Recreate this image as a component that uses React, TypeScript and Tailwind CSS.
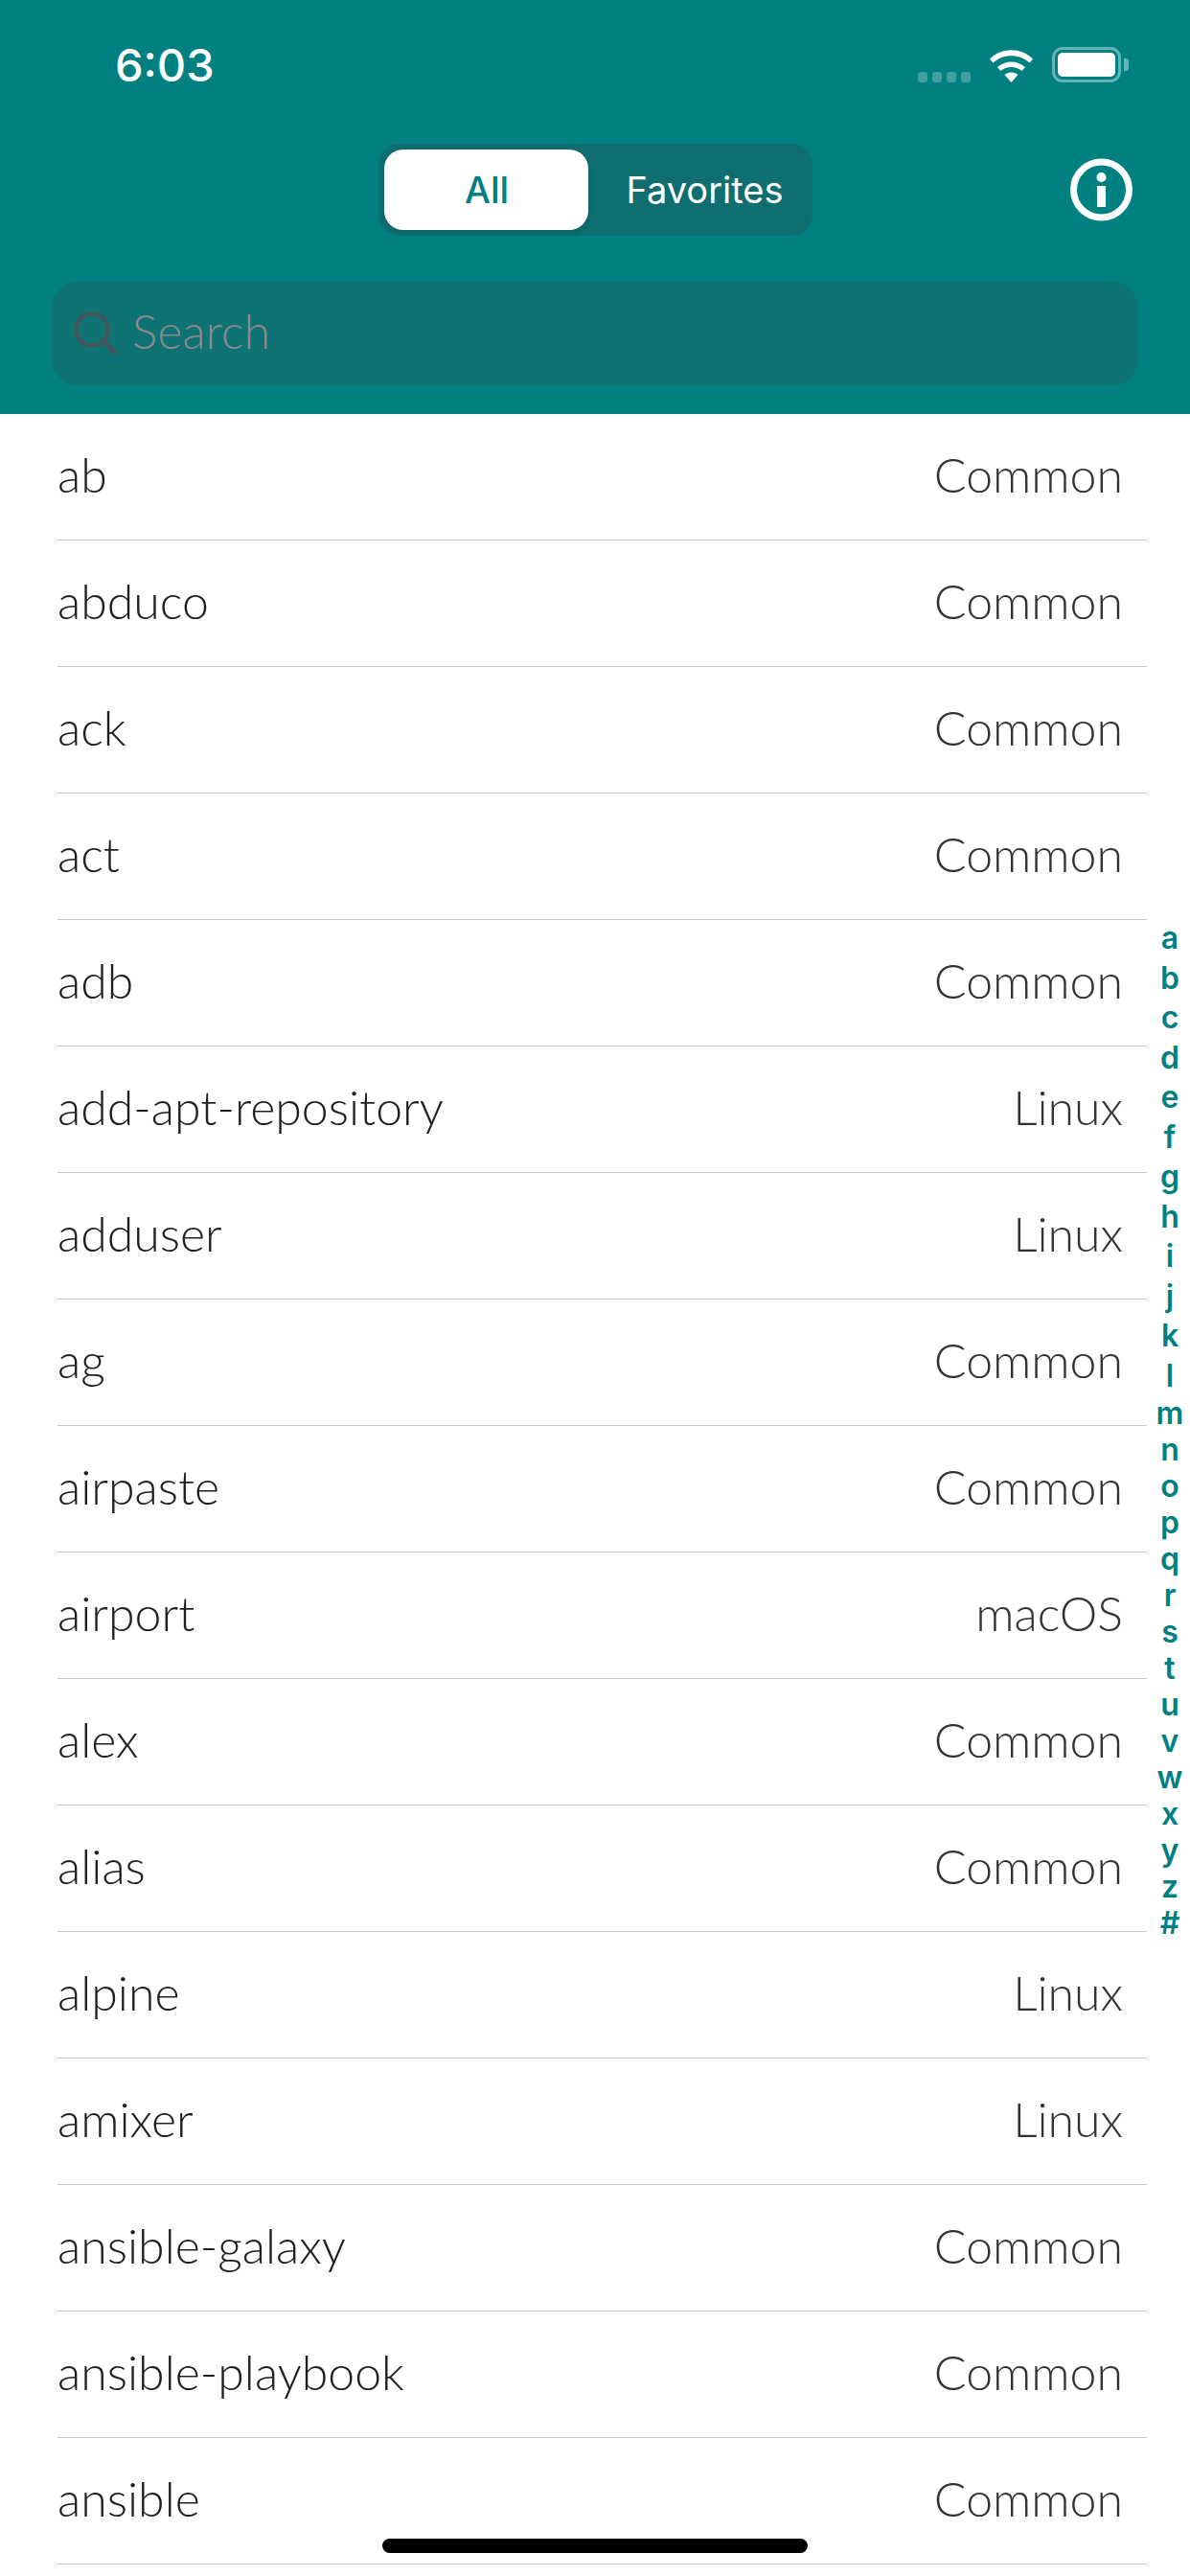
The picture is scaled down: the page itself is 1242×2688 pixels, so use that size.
const rows: [string, string][] = [
  ["ab", "Common"], ["abduco", "Common"], ["ack", "Common"], ["act", "Common"], ["adb", "Common"],
  ["add-apt-repository", "Linux"], ["adduser", "Linux"], ["ag", "Common"], ["airpaste", "Common"],
  ["airport", "macOS"], ["alex", "Common"], ["alias", "Common"], ["alpine", "Linux"], ["amixer", "Linux"],
  ["ansible-galaxy", "Common"], ["ansible-playbook", "Common"], ["ansible", "Common"],
];
const letters = "abcdefghijklmnopqrstuvwxyz#".split("");

export default function App() {
  return (
    <div className="relative h-[2688px] w-[1242px] overflow-hidden bg-white font-['Lato',sans-serif]">
      <header className="h-[432px] bg-[#008080]">
        <div className="flex h-[150px] items-start justify-between pl-[120px] pr-[72px]">
          <span className="mt-[42px] font-['Inter',sans-serif] text-[47px] leading-[52px] font-medium text-white">6:03</span>
          <div className="mt-[49px] flex items-start">
            <div className="mt-[26px] flex gap-[5px]">
              {[0, 1, 2, 3].map((i) => (
                <span key={i} className="h-[11px] w-[10px] rounded-[3px] bg-white/25" />
              ))}
            </div>
            <svg className="ml-[19px] mt-[1px]" width="47" height="36" viewBox="0 0 47 36" fill="none">
              <path d="M1 11.5C13.5 -0.8 33.5 -0.8 46 11.5L42.6 15.6C32 5.8 15 5.8 4.4 15.6Z" fill="white" />
              <path d="M9 20C17.5 12.5 29.5 12.5 38 20L34.6 24C28 18.5 19 18.5 12.4 24Z" fill="white" />
              <path d="M16.5 28C20.6 24.6 26.4 24.6 30.5 28L23.5 36Z" fill="white" />
            </svg>
            <div className="relative ml-[19px] h-[37px] w-[72px] rounded-[11px] border-[3px] border-white/40 p-[3px]">
              <div className="h-full rounded-[5px] bg-white" />
              <span className="absolute -right-[11px] top-[9px] h-[13px] w-[5px] rounded-r-[3px] bg-white/40" />
            </div>
          </div>
        </div>
        <div className="grid grid-cols-[1fr_453px_1fr] items-center">
          <div />
          <div className="flex h-[96px] items-center rounded-[22px] bg-[#0f6e70] p-[6px]">
            <div className="flex h-[84px] w-[213px] items-center justify-center rounded-[20px] bg-white pl-[2px] font-['Inter',sans-serif] text-[38px] font-medium text-[#008080] shadow-[0_2px_5px_rgba(0,0,0,0.15)]">
              All
            </div>
            <div className="flex flex-1 items-center justify-center pl-[16px] font-['Inter',sans-serif] text-[38px] text-white">
              Favorites
            </div>
          </div>
          <div className="flex justify-end pr-[60px]">
            <svg width="65" height="66" viewBox="0 0 65 66" fill="none">
              <circle cx="32.5" cy="33" r="29" stroke="white" strokeWidth="7" />
              <circle cx="32.5" cy="20" r="5" fill="white" />
              <rect x="28" y="29" width="9" height="22" fill="white" />
            </svg>
          </div>
        </div>
        <div className="mx-[54px] mt-[48px] flex h-[108px] w-[1134px] items-center rounded-[27px] bg-[#107373] pl-[23px]">
          <svg width="46" height="46" viewBox="0 0 46 46" fill="none">
            <circle cx="19" cy="19" r="16.5" stroke="#3f565a" strokeWidth="4.5" />
            <path d="M31 31L43 43" stroke="#3f565a" strokeWidth="5" strokeLinecap="round" />
          </svg>
          <span className="mb-[6px] ml-[15px] text-[50px] leading-none font-light text-[#8a8a8d]">Search</span>
        </div>
      </header>
      <main>
        {rows.map(([name, platform], i) => (
          <div key={i} className="ml-[60px] mr-[45px] flex h-[132px] items-center justify-between border-b border-[#c8c8c8] pr-[25px] pb-[4px] text-[50px] font-light">
            <span className="text-[#1f1f1f]">{name}</span>
            <span className="text-[#333333]">{platform}</span>
          </div>
        ))}
      </main>
      <nav className="absolute right-0 top-[958px] flex w-[42px] flex-col items-center font-['Inter',sans-serif] text-[32px] font-semibold text-[#008080]">
        {letters.map((l, i) => (
          <span key={l} className={i < 12 ? "leading-[41.5px]" : "leading-[38px]"}>{l}</span>
        ))}
      </nav>
      <div className="absolute left-[399px] top-[2649px] h-[15px] w-[444px] rounded-full bg-black" />
    </div>
  );
}
